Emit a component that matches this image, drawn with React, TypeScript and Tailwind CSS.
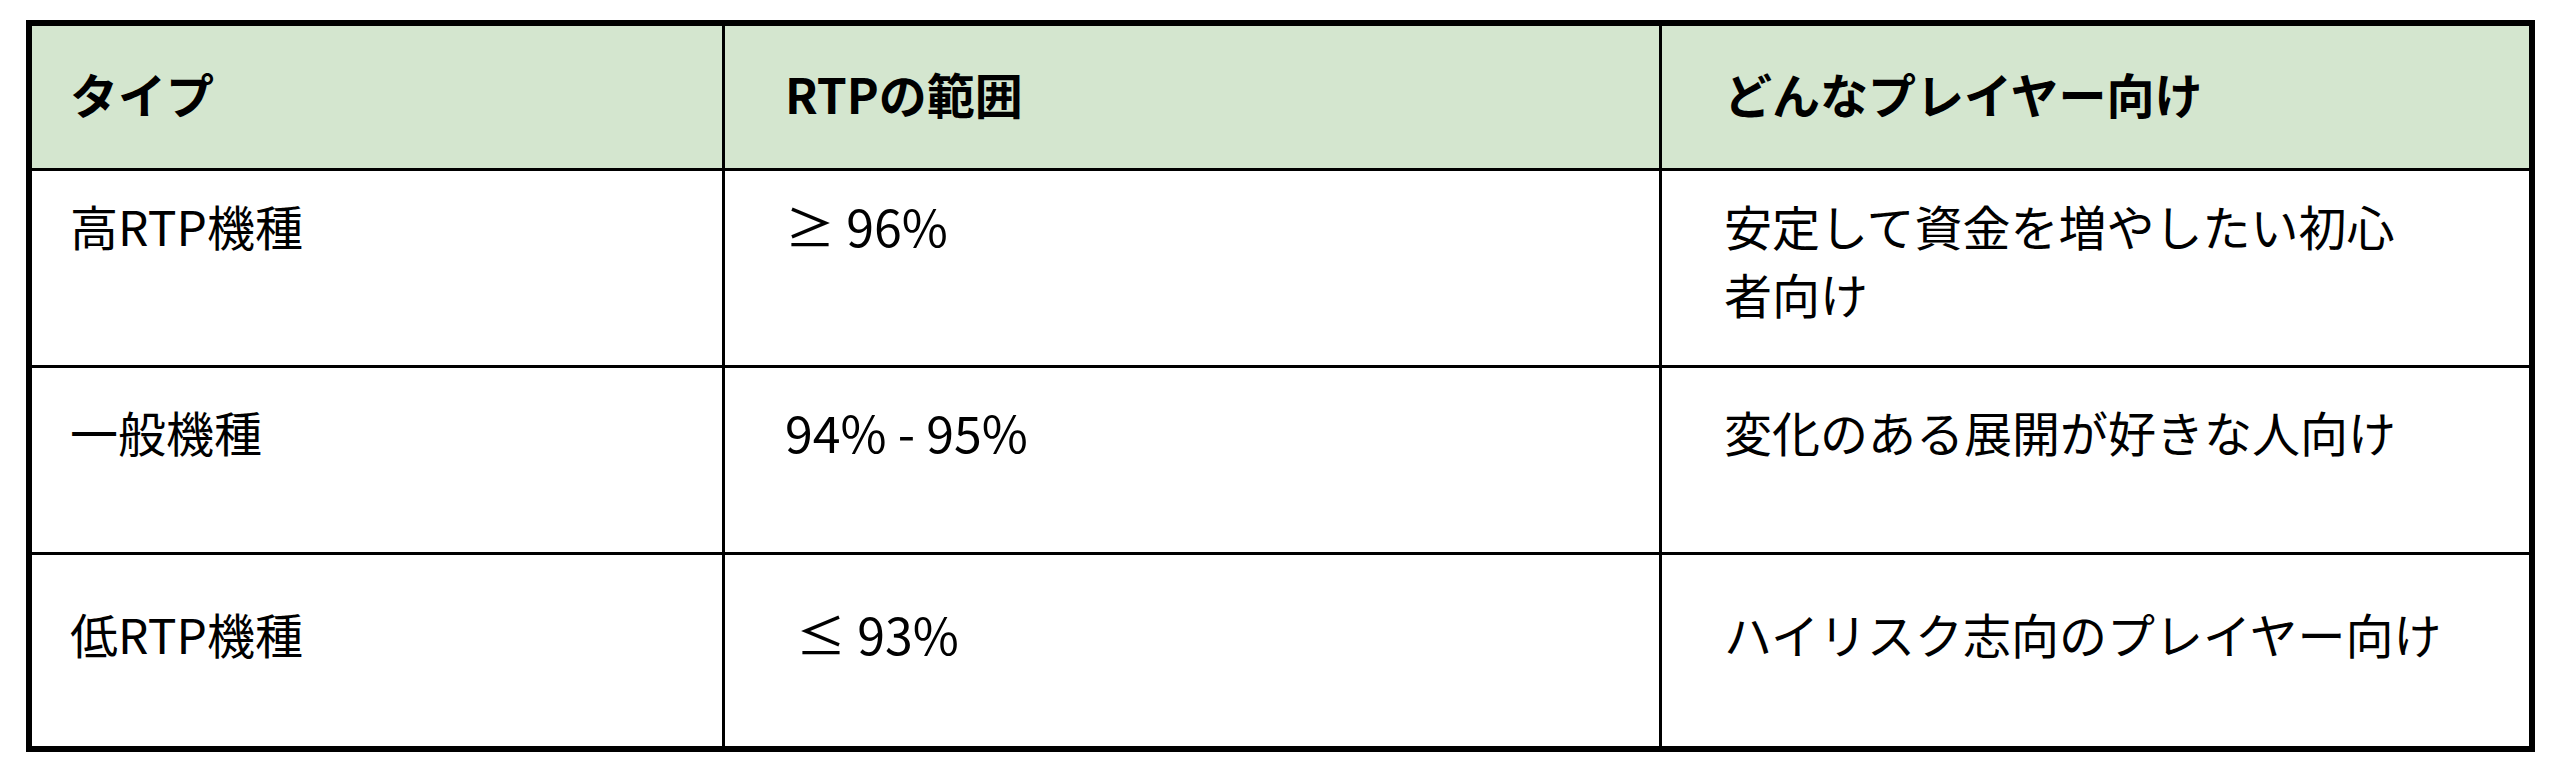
const rows = [
  { type: "高RTP機種", range: "≥ 96%", who: ["安定して資金を増やしたい初心", "者向け"], h: "h-[197px]", pt: "pt-[20px]", extra: "" },
  { type: "一般機種", range: "94% - 95%", who: ["変化のある展開が好きな人向け"], h: "h-[187px]", pt: "pt-[29px]", extra: "" },
  { type: "低RTP機種", range: "≤ 93%", who: ["ハイリスク志向のプレイヤー向け"], h: "h-[191px]", pt: "pt-[44px]", extra: "pl-[11px]" },
];

export default function App() {
  return (
    <div
      className="w-[2567px] h-[777px] bg-white pt-[20px] pl-[26px] text-black"
      style={{ fontFamily: "'Noto Sans CJK JP', 'Noto Sans', sans-serif" }}
    >
      <div className="w-[2509px] border-[6px] border-black">
        {/* header */}
        <div className="grid grid-cols-[693px_937px_867px] h-[145px] bg-[#d4e6cf] border-b-[3px] border-black text-[48px] leading-[68px] font-bold">
          <div className="flex items-center pl-[38px] pb-2 border-r-[3px] border-black">タイプ</div>
          <div className="flex items-center pl-[60px] pb-2 border-r-[3px] border-black">RTPの範囲</div>
          <div className="flex items-center pl-[62px] pb-2">どんなプレイヤー向け</div>
        </div>

        {rows.map((r, i) => (
          <div
            key={r.type}
            className={`grid grid-cols-[693px_937px_867px] ${r.h} text-[48px] leading-[68px] ${
              i < rows.length - 1 ? "border-b-[3px] border-black" : ""
            }`}
          >
            <div className={`${r.pt} pl-[38px] border-r-[3px] border-black`}>{r.type}</div>
            <div className={`${r.pt} pl-[60px] border-r-[3px] border-black text-[50px]`}>
              <span className={r.extra}>{r.range}</span>
            </div>
            <div className={`${r.pt} pl-[62px]`}>
              {r.who.map((line, j) => (
                <div key={j}>{line}</div>
              ))}
            </div>
          </div>
        ))}
      </div>
    </div>
  );
}
